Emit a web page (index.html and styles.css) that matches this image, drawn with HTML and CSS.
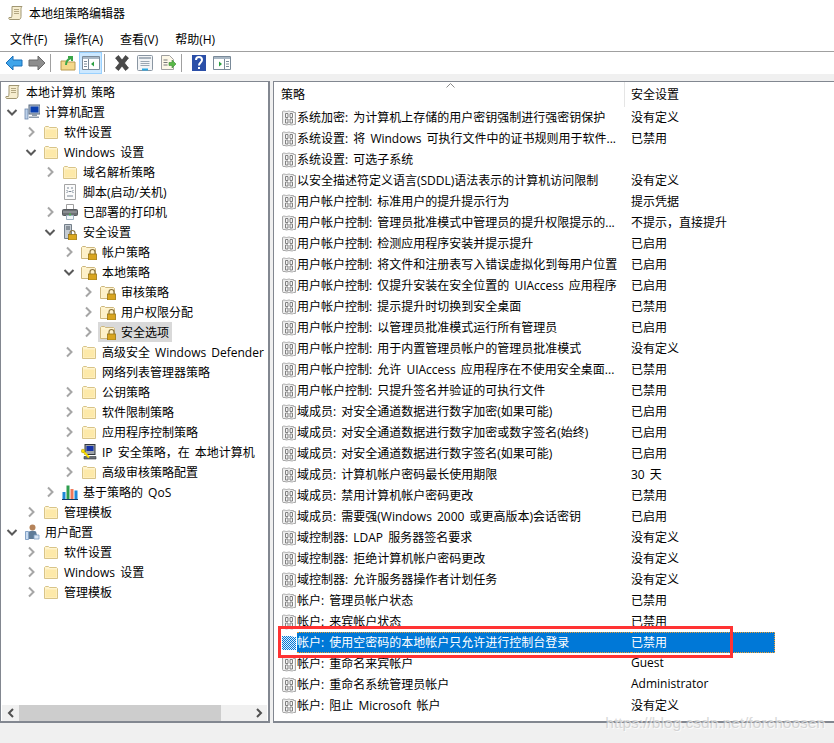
FILE: index.html
```html
<!DOCTYPE html>
<html lang="zh-CN">
<head>
  <meta charset="UTF-8">
  <title>本地组策略编辑器</title>
  <link rel="stylesheet" href="styles.css">
</head>
<body>

  <!-- Icon sprite -->
  <svg class="sprite" xmlns="http://www.w3.org/2000/svg">
    <defs>
      <pattern id="dither" width="2" height="2" patternUnits="userSpaceOnUse">
        <rect width="2" height="2" fill="#dfeefa"/>
        <rect width="1" height="1" fill="#0078d7"/>
        <rect x="1" y="1" width="1" height="1" fill="#0078d7"/>
      </pattern>
    </defs>
    <symbol id="i-open" viewBox="0 0 16 16"><path d="M3.5 6 8 10.5 12.5 6" fill="none" stroke="#595959" stroke-width="2"/></symbol>
    <symbol id="i-closed" viewBox="0 0 16 16"><path d="M6 3.5 10.5 8 6 12.5" fill="none" stroke="#a6a6a6" stroke-width="2"/></symbol>
    <symbol id="i-folder" viewBox="0 0 16 16">
      <path d="M1.5 14.5v-11l1-1h3l1 1h7l1 1v10z" fill="#fff4cf" stroke="#d8c488"/>
      <path d="M2.5 5.5h11v8h-11z" fill="#fde9a9"/>
    </symbol>
    <symbol id="i-lockfolder" viewBox="0 0 16 16">
      <path d="M.5 14.5v-11l1-1h3l1 1h8l1 1v10z" fill="#fff4cf" stroke="#cdb77e"/>
      <path d="M1.5 5.5h12v8h-12z" fill="#fdf0c8"/>
      <path d="M9 10V8a2.5 2.5 0 0 1 5 0v2" fill="none" stroke="#8a7440" stroke-width="1.2"/>
      <rect x="7.5" y="10" width="8" height="6" fill="#d9a520" stroke="#9a7512" stroke-width=".8"/>
    </symbol>
    <symbol id="i-scroll" viewBox="0 0 16 16">
      <path d="M4 1.5h10c-1 1-1 2-1 3v7c0 2-1 3-2 3H2c-1.2 0-1.5-1-1-2h2.5C4 11 4 9 4 8z" fill="#f6edcf" stroke="#a09672"/>
      <path d="M6 4.5h5M6 6.5h5M6 8.5h5" stroke="#b3a782"/>
    </symbol>
    <symbol id="i-computer" viewBox="0 0 16 16">
      <rect x="5" y="1" width="11" height="9" fill="#b8c4d4" stroke="#56687f"/>
      <rect x="6.5" y="2.5" width="8" height="6" fill="#0b3fb0"/>
      <path d="M8 10h5v2H8zM5 12.5h10V14H5z" fill="#8c99aa"/>
      <rect x="1" y="5" width="3" height="10" fill="#bcd0e8" stroke="#6d87ad" stroke-width=".8"/>
    </symbol>
    <symbol id="i-script" viewBox="0 0 16 16">
      <path d="M2.5.5h11v15h-11z" fill="#fbfbfb" stroke="#a4a4a4"/>
      <path d="M5 4h2M9 4h2M4.5 6 6 7.5 4.5 9M11.5 6 10 7.5 11.5 9M7 7.5h2M5 12h6" fill="none" stroke="#7a8794"/>
    </symbol>
    <symbol id="i-printer" viewBox="0 0 16 16">
      <path d="M4.5.5h7v5h-7z" fill="#fff" stroke="#a0a0a0"/>
      <rect x=".5" y="5.5" width="15" height="6" rx="1" fill="#6e7276" stroke="#565a5e"/>
      <path d="M1 8h14" stroke="#a8acb0"/>
      <path d="M4.5 11.5h7v4h-7z" fill="#f4f8fb" stroke="#9fb3c2"/>
      <rect x="7" y="9.5" width="2" height="2" fill="#4caf50"/>
    </symbol>
    <symbol id="i-server" viewBox="0 0 16 16">
      <path d="M2.5.5h7v14h-7z" fill="#c5ccd3" stroke="#75808a"/>
      <path d="M4 3h4M4 5h4" stroke="#4c5660"/>
      <path d="M8 11V9a2.5 2.5 0 0 1 5 0v2" fill="none" stroke="#8a7440" stroke-width="1.2"/>
      <rect x="6.5" y="10.5" width="8" height="5.5" fill="#dba81f" stroke="#9a7512" stroke-width=".8"/>
    </symbol>
    <symbol id="i-ipkey" viewBox="0 0 16 16">
      <rect x="4" y=".5" width="10" height="10" fill="#9ea3a8" stroke="#33383d"/>
      <rect x="5.5" y="2" width="7" height="5" fill="#1533a8"/>
      <path d="M3 12.5h12V15H3z" fill="#6b7075" stroke="#33383d" stroke-width=".6"/>
      <path d="M1.5 6.5 8 13.5" stroke="#ffe000" stroke-width="2"/>
      <circle cx="2" cy="7" r="1.8" fill="#ffe000" stroke="#a08a00" stroke-width=".5"/>
    </symbol>
    <symbol id="i-qos" viewBox="0 0 16 16">
      <rect x=".5" y="8" width="3" height="7" fill="#1e88d8"/>
      <rect x="4.5" y="1.5" width="3" height="13.5" fill="#2e9e4f"/>
      <rect x="8.5" y="5" width="3" height="10" fill="#f0785a"/>
      <rect x="12.5" y="6.5" width="3" height="8.5" fill="#1e88d8"/>
      <path d="M0 15.5h16" stroke="#123a66"/>
    </symbol>
    <symbol id="i-user" viewBox="0 0 16 16">
      <circle cx="8.5" cy="3.5" r="3" fill="#b5835a"/>
      <path d="M5 7.5c2-1 5-1 7 0l2 7.5H5z" fill="#5f7c98"/>
      <path d="M1.5 7.5h3v8h-3z" fill="#c9dcf0" stroke="#6d91bb" stroke-width=".8"/>
      <path d="M10 11h5v4h-5z" fill="#d9e6f4" stroke="#7c9cc0" stroke-width=".8"/>
    </symbol>
    <symbol id="i-policy" viewBox="0 0 16 16">
      <path d="M1.5 1.500c1.500-1 2.500 0 4 0s2.500-1 4 0h3v1h2v12h-2c-1.500 1-3 0-4.500 0s-2.500 1-4 0h-2l-.5-1z" fill="#ececec" stroke="#a8a8a8"/>
      <path d="M3.500 3h9.500v10.500H3.500z" fill="#fff"/>
      <path d="M4.500 3.500h2.500v4H4.500zM9 3.500h2.500v4H9zM4.500 9h2.500v4H4.500zM9 9h2.500v4H9z" fill="#f4f4f4" stroke="#808080"/>
    </symbol>
    <symbol id="i-policy-sel" viewBox="0 0 16 16">
      <path d="M1 1h10l1 1h3v13H2l-1-1z" fill="url(#dither)"/>
    </symbol>
    <symbol id="t-back" viewBox="0 0 18 16"><path d="M8 1 1 8l7 7v-4h9V5H8z" fill="#3fa5ea" stroke="#1b6fb8"/></symbol>
    <symbol id="t-forward" viewBox="0 0 18 16"><path d="M10 1l7 7-7 7v-4H1V5h9z" fill="#8e8e8e" stroke="#6a6a6a"/></symbol>
    <symbol id="t-up" viewBox="0 0 16 16">
      <path d="M1 15V6h5l1 1h8v8z" fill="#f4d98c" stroke="#b99a50"/>
      <path d="M6 10c0-4 2-6 5-7M8 2h4v4" fill="none" stroke="#3aa648" stroke-width="2"/>
    </symbol>
    <symbol id="t-tree" viewBox="0 0 18 16">
      <path d="M.5 1.5h17v13H.5z" fill="#fff" stroke="#7a8a99"/>
      <path d="M1 2h16v2H1z" fill="#a9b7c4"/>
      <path d="M6.5 4v10" stroke="#7a8a99"/>
      <path d="M2 6.5h3M2 9h3M2 11.5h3" stroke="#7a8a99"/>
      <path d="M12 6.5v5L9 9z" fill="#2ea043"/>
    </symbol>
    <symbol id="t-delete" viewBox="0 0 16 16"><path d="M1.5 3l3-2.500L8 5l3.500-4.500 3 2.500L10.500 8l4 5-3 2.500L8 11l-3.500 4.500-3-2.500 4-5z" fill="#4a4a4a" stroke="#2e2e2e" stroke-width=".6"/></symbol>
    <symbol id="t-props" viewBox="0 0 16 16">
      <rect x=".5" y=".5" width="15" height="15" rx="1" fill="#f2f4f6" stroke="#8a96a2"/>
      <path d="M2 3h12" stroke="#a8b2bc" stroke-width="2"/>
      <path d="M3.5 6.5h9M3.5 8.5h9M3.5 10.5h9" stroke="#9aa6b2"/>
      <path d="M5 14.5h6" stroke="#2aa7e0" stroke-width="2"/>
    </symbol>
    <symbol id="t-export" viewBox="0 0 16 16">
      <path d="M1.5.5h8l4 4v10h-12z" fill="#fdf8e8" stroke="#a0a0a0"/>
      <path d="M3.5 5h4M3.5 7.5h4M3.5 10h4" stroke="#777"/>
      <path d="M9 7.5h3V5l4 4-4 4v-2.500H9z" fill="#59b948" stroke="#3d8c32" stroke-width=".6"/>
    </symbol>
    <symbol id="t-help" viewBox="0 0 14 16">
      <rect width="14" height="16" fill="#2b4fa8"/>
      <path d="M4 5c0-4 6-4 6 0 0 2.500-3 2.500-3 5.500" fill="none" stroke="#fff" stroke-width="2"/>
      <rect x="6" y="12" width="2" height="2" fill="#fff"/>
    </symbol>
    <symbol id="t-action" viewBox="0 0 18 16">
      <path d="M.5 1.500h17v13H.5z" fill="#fff" stroke="#7a8a99"/>
      <path d="M1 2h16v2H1z" fill="#a9b7c4"/>
      <path d="M11.500 4v10" stroke="#7a8a99"/>
      <path d="M13 6.500h3M13 9h3M13 11.500h3" stroke="#7a8a99"/>
      <path d="M6 6.500v5L9 9z" fill="#2ea043"/>
    </symbol>
  </svg>

  <div class="window">
    <header class="titlebar">
      <svg class="title-icon"><use href="#i-scroll"/></svg>
      <span>本地组策略编辑器</span>
    </header>

    <nav class="menubar">
      <span class="menu-item">文件(F)</span>
      <span class="menu-item">操作(A)</span>
      <span class="menu-item">查看(V)</span>
      <span class="menu-item">帮助(H)</span>
    </nav>

    <div class="toolbar">
      <button class="tool"><svg class="tool-wide"><use href="#t-back"/></svg></button>
      <button class="tool"><svg class="tool-wide"><use href="#t-forward"/></svg></button>
      <span class="tool-sep"></span>
      <button class="tool"><svg class="tool-icon"><use href="#t-up"/></svg></button>
      <button class="tool tool-active"><svg class="tool-wide"><use href="#t-tree"/></svg></button>
      <span class="tool-sep"></span>
      <button class="tool"><svg class="tool-icon"><use href="#t-delete"/></svg></button>
      <button class="tool"><svg class="tool-icon"><use href="#t-props"/></svg></button>
      <button class="tool"><svg class="tool-icon"><use href="#t-export"/></svg></button>
      <span class="tool-sep"></span>
      <button class="tool"><svg class="tool-help"><use href="#t-help"/></svg></button>
      <button class="tool"><svg class="tool-wide"><use href="#t-action"/></svg></button>
    </div>

    <main class="panes">
      <!-- Tree -->
      <section class="tree-pane">
        <ul class="tree">
          <li class="node root"><svg class="node-icon"><use href="#i-scroll"/></svg><span>本地计算机 策略</span></li>
          <li class="node d0"><svg class="toggle"><use href="#i-open"/></svg><svg class="node-icon"><use href="#i-computer"/></svg><span>计算机配置</span></li>
          <li class="node d1"><svg class="toggle"><use href="#i-closed"/></svg><svg class="node-icon"><use href="#i-folder"/></svg><span>软件设置</span></li>
          <li class="node d1"><svg class="toggle"><use href="#i-open"/></svg><svg class="node-icon"><use href="#i-folder"/></svg><span>Windows 设置</span></li>
          <li class="node d2"><svg class="toggle"><use href="#i-closed"/></svg><svg class="node-icon"><use href="#i-folder"/></svg><span>域名解析策略</span></li>
          <li class="node d2"><svg class="toggle"></svg><svg class="node-icon"><use href="#i-script"/></svg><span>脚本(启动/关机)</span></li>
          <li class="node d2"><svg class="toggle"><use href="#i-closed"/></svg><svg class="node-icon"><use href="#i-printer"/></svg><span>已部署的打印机</span></li>
          <li class="node d2"><svg class="toggle"><use href="#i-open"/></svg><svg class="node-icon"><use href="#i-server"/></svg><span>安全设置</span></li>
          <li class="node d3"><svg class="toggle"><use href="#i-closed"/></svg><svg class="node-icon"><use href="#i-lockfolder"/></svg><span>帐户策略</span></li>
          <li class="node d3"><svg class="toggle"><use href="#i-open"/></svg><svg class="node-icon"><use href="#i-lockfolder"/></svg><span>本地策略</span></li>
          <li class="node d4"><svg class="toggle"><use href="#i-closed"/></svg><svg class="node-icon"><use href="#i-lockfolder"/></svg><span>审核策略</span></li>
          <li class="node d4"><svg class="toggle"><use href="#i-closed"/></svg><svg class="node-icon"><use href="#i-lockfolder"/></svg><span>用户权限分配</span></li>
          <li class="node d4 node-current"><svg class="toggle"><use href="#i-closed"/></svg><span class="current-box"><svg class="node-icon"><use href="#i-lockfolder"/></svg><span>安全选项</span></span></li>
          <li class="node d3"><svg class="toggle"><use href="#i-closed"/></svg><svg class="node-icon"><use href="#i-folder"/></svg><span>高级安全 Windows Defender</span></li>
          <li class="node d3"><svg class="toggle"></svg><svg class="node-icon"><use href="#i-folder"/></svg><span>网络列表管理器策略</span></li>
          <li class="node d3"><svg class="toggle"><use href="#i-closed"/></svg><svg class="node-icon"><use href="#i-folder"/></svg><span>公钥策略</span></li>
          <li class="node d3"><svg class="toggle"><use href="#i-closed"/></svg><svg class="node-icon"><use href="#i-folder"/></svg><span>软件限制策略</span></li>
          <li class="node d3"><svg class="toggle"><use href="#i-closed"/></svg><svg class="node-icon"><use href="#i-folder"/></svg><span>应用程序控制策略</span></li>
          <li class="node d3"><svg class="toggle"><use href="#i-closed"/></svg><svg class="node-icon"><use href="#i-ipkey"/></svg><span>IP 安全策略&#xFF0C;在 本地计算机</span></li>
          <li class="node d3"><svg class="toggle"><use href="#i-closed"/></svg><svg class="node-icon"><use href="#i-folder"/></svg><span>高级审核策略配置</span></li>
          <li class="node d2"><svg class="toggle"><use href="#i-closed"/></svg><svg class="node-icon"><use href="#i-qos"/></svg><span>基于策略的 QoS</span></li>
          <li class="node d1"><svg class="toggle"><use href="#i-closed"/></svg><svg class="node-icon"><use href="#i-folder"/></svg><span>管理模板</span></li>
          <li class="node d0"><svg class="toggle"><use href="#i-open"/></svg><svg class="node-icon"><use href="#i-user"/></svg><span>用户配置</span></li>
          <li class="node d1"><svg class="toggle"><use href="#i-closed"/></svg><svg class="node-icon"><use href="#i-folder"/></svg><span>软件设置</span></li>
          <li class="node d1"><svg class="toggle"><use href="#i-closed"/></svg><svg class="node-icon"><use href="#i-folder"/></svg><span>Windows 设置</span></li>
          <li class="node d1"><svg class="toggle"><use href="#i-closed"/></svg><svg class="node-icon"><use href="#i-folder"/></svg><span>管理模板</span></li>
        </ul>
        <div class="hscroll">
          <span class="hscroll-arrow">
            <svg viewBox="0 0 8 10"><path d="M6 1 2 5l4 4" fill="none" stroke="#505050" stroke-width="2"/></svg>
          </span>
          <span class="hscroll-track"><span class="hscroll-thumb"></span></span>
          <span class="hscroll-arrow">
            <svg viewBox="0 0 8 10"><path d="M2 1l4 4-4 4" fill="none" stroke="#505050" stroke-width="2"/></svg>
          </span>
        </div>
      </section>

      <!-- Policy list -->
      <section class="list-pane">
        <div class="list-head">
          <div class="head-name">策略<svg class="sort-caret" viewBox="0 0 9 5"><path d="M.5 4.500 4.500 .5l4 4" fill="none" stroke="#8a8a8a"/></svg></div>
          <div class="head-value">安全设置</div>
        </div>
        <ul class="list">
          <li class="row"><svg class="row-icon"><use href="#i-policy"/></svg><span class="row-name">系统加密: 为计算机上存储的用户密钥强制进行强密钥保护</span><span class="row-value">没有定义</span></li>
          <li class="row"><svg class="row-icon"><use href="#i-policy"/></svg><span class="row-name">系统设置: 将 Windows 可执行文件中的证书规则用于软件...</span><span class="row-value">已禁用</span></li>
          <li class="row"><svg class="row-icon"><use href="#i-policy"/></svg><span class="row-name">系统设置: 可选子系统</span><span class="row-value"></span></li>
          <li class="row"><svg class="row-icon"><use href="#i-policy"/></svg><span class="row-name">以安全描述符定义语言(SDDL)语法表示的计算机访问限制</span><span class="row-value">没有定义</span></li>
          <li class="row"><svg class="row-icon"><use href="#i-policy"/></svg><span class="row-name">用户帐户控制: 标准用户的提升提示行为</span><span class="row-value">提示凭据</span></li>
          <li class="row"><svg class="row-icon"><use href="#i-policy"/></svg><span class="row-name">用户帐户控制: 管理员批准模式中管理员的提升权限提示的...</span><span class="row-value">不提示&#xFF0C;直接提升</span></li>
          <li class="row"><svg class="row-icon"><use href="#i-policy"/></svg><span class="row-name">用户帐户控制: 检测应用程序安装并提示提升</span><span class="row-value">已启用</span></li>
          <li class="row"><svg class="row-icon"><use href="#i-policy"/></svg><span class="row-name">用户帐户控制: 将文件和注册表写入错误虚拟化到每用户位置</span><span class="row-value">已启用</span></li>
          <li class="row"><svg class="row-icon"><use href="#i-policy"/></svg><span class="row-name">用户帐户控制: 仅提升安装在安全位置的 UIAccess 应用程序</span><span class="row-value">已启用</span></li>
          <li class="row"><svg class="row-icon"><use href="#i-policy"/></svg><span class="row-name">用户帐户控制: 提示提升时切换到安全桌面</span><span class="row-value">已禁用</span></li>
          <li class="row"><svg class="row-icon"><use href="#i-policy"/></svg><span class="row-name">用户帐户控制: 以管理员批准模式运行所有管理员</span><span class="row-value">已启用</span></li>
          <li class="row"><svg class="row-icon"><use href="#i-policy"/></svg><span class="row-name">用户帐户控制: 用于内置管理员帐户的管理员批准模式</span><span class="row-value">没有定义</span></li>
          <li class="row"><svg class="row-icon"><use href="#i-policy"/></svg><span class="row-name">用户帐户控制: 允许 UIAccess 应用程序在不使用安全桌面...</span><span class="row-value">已禁用</span></li>
          <li class="row"><svg class="row-icon"><use href="#i-policy"/></svg><span class="row-name">用户帐户控制: 只提升签名并验证的可执行文件</span><span class="row-value">已禁用</span></li>
          <li class="row"><svg class="row-icon"><use href="#i-policy"/></svg><span class="row-name">域成员: 对安全通道数据进行数字加密(如果可能)</span><span class="row-value">已启用</span></li>
          <li class="row"><svg class="row-icon"><use href="#i-policy"/></svg><span class="row-name">域成员: 对安全通道数据进行数字加密或数字签名(始终)</span><span class="row-value">已启用</span></li>
          <li class="row"><svg class="row-icon"><use href="#i-policy"/></svg><span class="row-name">域成员: 对安全通道数据进行数字签名(如果可能)</span><span class="row-value">已启用</span></li>
          <li class="row"><svg class="row-icon"><use href="#i-policy"/></svg><span class="row-name">域成员: 计算机帐户密码最长使用期限</span><span class="row-value">30 天</span></li>
          <li class="row"><svg class="row-icon"><use href="#i-policy"/></svg><span class="row-name">域成员: 禁用计算机帐户密码更改</span><span class="row-value">已禁用</span></li>
          <li class="row"><svg class="row-icon"><use href="#i-policy"/></svg><span class="row-name">域成员: 需要强(Windows 2000 或更高版本)会话密钥</span><span class="row-value">已启用</span></li>
          <li class="row"><svg class="row-icon"><use href="#i-policy"/></svg><span class="row-name">域控制器: LDAP 服务器签名要求</span><span class="row-value">没有定义</span></li>
          <li class="row"><svg class="row-icon"><use href="#i-policy"/></svg><span class="row-name">域控制器: 拒绝计算机帐户密码更改</span><span class="row-value">没有定义</span></li>
          <li class="row"><svg class="row-icon"><use href="#i-policy"/></svg><span class="row-name">域控制器: 允许服务器操作者计划任务</span><span class="row-value">没有定义</span></li>
          <li class="row"><svg class="row-icon"><use href="#i-policy"/></svg><span class="row-name">帐户: 管理员帐户状态</span><span class="row-value">已禁用</span></li>
          <li class="row"><svg class="row-icon"><use href="#i-policy"/></svg><span class="row-name">帐户: 来宾帐户状态</span><span class="row-value">已禁用</span></li>
          <li class="row row-selected"><svg class="row-icon"><use href="#i-policy-sel"/></svg><span class="row-name">帐户: 使用空密码的本地帐户只允许进行控制台登录</span><span class="row-value">已禁用</span></li>
          <li class="row"><svg class="row-icon"><use href="#i-policy"/></svg><span class="row-name">帐户: 重命名来宾帐户</span><span class="row-value">Guest</span></li>
          <li class="row"><svg class="row-icon"><use href="#i-policy"/></svg><span class="row-name">帐户: 重命名系统管理员帐户</span><span class="row-value">Administrator</span></li>
          <li class="row"><svg class="row-icon"><use href="#i-policy"/></svg><span class="row-name">帐户: 阻止 Microsoft 帐户</span><span class="row-value">没有定义</span></li>
        </ul>
      </section>
    </main>

    <footer class="statusbar"></footer>

    <!-- Annotations on top of the screenshot -->
    <div class="red-mark"></div>
    <div class="watermark">https://blog.csdn.net/forchoosen</div>
  </div>

</body>
</html>
```

FILE: styles.css
```css
* {
  box-sizing: border-box;
}
html, body {
  margin: 0;
  padding: 0;
}
body {
  font-family: "Open Sans", "Noto Sans CJK SC", sans-serif;
  font-size: 12px;
  word-spacing: 2px;
  color: #000;
  background: #f0f0f0;
}
ul {
  list-style: none;
  margin: 0;
  padding: 0;
}
.sprite {
  position: absolute;
  width: 0;
  height: 0;
}
.window {
  position: relative;
  display: flex;
  flex-direction: column;
  width: 834px;
  height: 743px;
  overflow: hidden;
}

/* Title and menu */
.titlebar {
  display: flex;
  align-items: center;
  height: 27px;
  padding: 0 0 2px 8px;
  background: #fff;
}
.title-icon {
  width: 16px;
  height: 16px;
  margin-right: 5px;
}
.menubar {
  display: flex;
  align-items: center;
  gap: 17px;
  height: 24px;
  padding-left: 10px;
  background: #fff;
}

/* Toolbar */
.toolbar {
  display: flex;
  align-items: center;
  height: 23px;
  padding-left: 2px;
  background: #fff;
  border-top: 1px solid #a0a0a0;
}
.tool {
  display: flex;
  align-items: center;
  justify-content: center;
  width: 23px;
  height: 22px;
  padding: 0;
  border: 1px solid transparent;
  background: none;
}
.tool-active {
  background: #cce8ff;
  border-color: #99d1ff;
}
.tool-icon {
  width: 16px;
  height: 16px;
}
.tool-wide {
  width: 18px;
  height: 16px;
}
.tool-help {
  width: 14px;
  height: 16px;
}
.tool-sep {
  width: 1px;
  height: 18px;
  margin: 0 5px 0 2px;
  background: #a0a0a0;
}

/* Panes */
.panes {
  display: flex;
  gap: 3px;
  height: 642px;
  margin-top: 7px;
}
.tree-pane {
  display: flex;
  flex-direction: column;
  width: 270px;
  background: #fff;
  border: 1px solid #828790;
  border-width: 1px 2px 2px 1px;
}
.tree {
  flex: 1;
  overflow: hidden;
}
.node {
  display: flex;
  align-items: center;
  height: 20px;
  white-space: nowrap;
}
.root {
  padding-left: 4px;
}
.d0 { padding-left: 3px; }
.d1 { padding-left: 22px; }
.d2 { padding-left: 41px; }
.d3 { padding-left: 60px; }
.d4 { padding-left: 79px; }
.toggle {
  flex: none;
  width: 16px;
  height: 16px;
  margin-right: 4px;
}
.node-icon {
  flex: none;
  width: 16px;
  height: 16px;
  margin-right: 5px;
}
.current-box {
  display: flex;
  align-items: center;
  height: 20px;
  margin-left: -2px;
  padding: 0 3px 0 2px;
  background: #d9d9d9;
}
.hscroll {
  display: flex;
  height: 16px;
  margin: 0 1px;
  background: #f0f0f0;
}
.hscroll-arrow {
  display: flex;
  align-items: center;
  justify-content: center;
  width: 17px;
}
.hscroll-arrow svg {
  width: 8px;
  height: 10px;
}
.hscroll-track {
  flex: 1;
}
.hscroll-thumb {
  display: block;
  width: 202px;
  height: 100%;
  background: #cdcdcd;
}

/* Policy list */
.list-pane {
  flex: 1;
  background: #fff;
  border: 1px solid #828790;
  border-width: 1px 0 2px 1px;
}
.list-head {
  display: flex;
  height: 25px;
}
.head-name {
  position: relative;
  width: 351px;
  padding: 3px 0 0 7px;
  border-right: 1px solid #e5e5e5;
}
.sort-caret {
  position: absolute;
  left: 172px;
  top: 1px;
  width: 9px;
  height: 5px;
}
.head-value {
  padding: 3px 0 0 6px;
}
.row {
  display: flex;
  align-items: center;
  width: 494px;
  height: 21px;
  margin-left: 7px;
  white-space: nowrap;
}
.row-icon {
  flex: none;
  width: 16px;
  height: 16px;
}
.row-name {
  width: 334px;
  padding-bottom: 2px;
  overflow: hidden;
}
.row-value {
  flex: 1;
  padding-bottom: 2px;
}
.row-selected .row-name,
.row-selected .row-value {
  height: 21px;
  padding-bottom: 0;
  line-height: 19px;
  color: #fff;
  background: #0078d7;
  border-block: 1px dotted #f0a030;
}
.row-selected .row-value {
  border-right: 1px dotted #f0a030;
}

.statusbar {
  flex: 1;
  background: #f0f0f0;
}

/* Annotations */
.red-mark {
  position: absolute;
  left: 278px;
  top: 626px;
  width: 455px;
  height: 32px;
  border: 3px solid #ff3333;
}
.watermark {
  position: absolute;
  right: 9px;
  bottom: 11px;
  font-family: "Liberation Sans", sans-serif;
  font-size: 15.5px;
  word-spacing: 0;
  color: rgba(190, 190, 190, 0.6);
  text-shadow: 1px 1px 0 rgba(255, 255, 255, 0.7);
}
```
